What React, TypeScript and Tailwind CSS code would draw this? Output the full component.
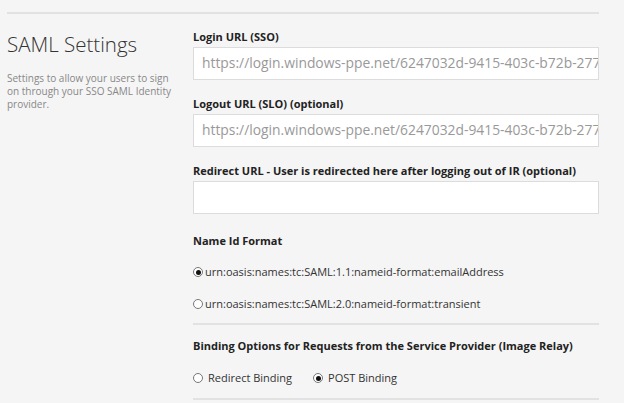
const FONT = "font-['Open_Sans','Noto_Sans',sans-serif]";

function Radio({ checked, label, wide }: { checked?: boolean; label: string; wide?: boolean }) {
  return (
    <label className={`flex items-center text-[11px] text-[#333] ${wide ? "gap-[5px]" : "gap-[2px]"}`}>
      <span className="flex h-[10px] w-[10px] items-center justify-center rounded-full border border-[#777] bg-white">
        {checked && <span className="h-[5px] w-[5px] rounded-full bg-[#111]" />}
      </span>
      {label}
    </label>
  );
}

function Field({ label, value }: { label: string; value?: string }) {
  return (
    <div className="flex flex-col gap-[3px]">
      <div className="text-[11px] font-bold leading-[15px] text-[#222]">{label}</div>
      <div className="flex h-[33px] items-center overflow-hidden whitespace-nowrap border border-[#dcdcdc] bg-white pl-[8px] text-[13.85px] text-[#999]">
        {value}
      </div>
    </div>
  );
}

const URL = "https://login.windows-ppe.net/6247032d-9415-403c-b72b-277a1f3d9c4e/saml2";

export default function App() {
  return (
    <div className={`${FONT} h-[403px] w-[624px] overflow-hidden bg-[#f5f5f5]`}>
      <div className="ml-[7px] mr-[25px] mt-[12px] border-t-2 border-[#e2e2e2]" />
      <div className="flex">
        <div className="w-[193px] shrink-0 pl-[7px] pt-[17px]">
          <h1 className="text-[20.5px] font-light leading-[26px] text-[#333]">SAML Settings</h1>
          <p className="mt-[15px] pr-[14px] text-[10px] leading-[13px] text-[#888]">
            Settings to allow your users to sign on through your SSO SAML Identity provider.
          </p>
        </div>
        <div className="w-[406px] pt-[15px]">
          <div className="flex flex-col gap-[16px]">
            <Field label="Login URL (SSO)" value={URL} />
            <Field label="Logout URL (SLO) (optional)" value={URL} />
            <Field label="Redirect URL - User is redirected here after logging out of IR (optional)" />
          </div>
          <div className="mt-[19px] text-[11px] font-bold leading-[15px] text-[#222]">Name Id Format</div>
          <div className="mt-[16px] flex flex-col gap-[15px]">
            <Radio checked label="urn:oasis:names:tc:SAML:1.1:nameid-format:emailAddress" />
            <Radio label="urn:oasis:names:tc:SAML:2.0:nameid-format:transient" />
          </div>
          <div className="mt-[11px] border-t-2 border-[#e2e2e2]" />
          <div className="mt-[13px] text-[11px] font-bold leading-[15px] text-[#222]">
            Binding Options for Requests from the Service Provider (Image Relay)
          </div>
          <div className="mt-[17px] flex gap-[21px]">
            <Radio wide label="Redirect Binding" />
            <Radio wide checked label="POST Binding" />
          </div>
          <div className="mt-[11px] border-t-2 border-[#e2e2e2]" />
        </div>
      </div>
    </div>
  );
}
